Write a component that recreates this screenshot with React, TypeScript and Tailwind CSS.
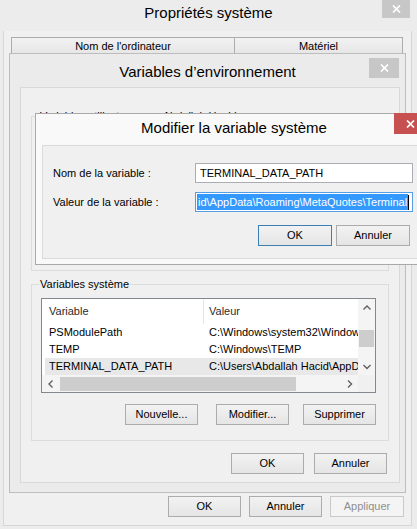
import React from "react";

type BtnProps = {
  label: string;
  className?: string;
  primary?: boolean;
  disabled?: boolean;
};

const Btn = ({ label, className = "", primary, disabled }: BtnProps) => (
  <button
    className={
      "h-[21px] shrink-0 border text-[11px] leading-none " +
      (disabled
        ? "border-[#c9c9c9] bg-[#f4f4f4] text-[#8f8f8f] "
        : primary
        ? "border-[#3c7fb1] bg-linear-to-b from-[#f2f2f2] to-[#e5e5e5] text-black "
        : "border-[#acacac] bg-linear-to-b from-[#f2f2f2] to-[#e5e5e5] text-black ") +
      className
    }
  >
    {label}
  </button>
);

const CloseBtn = ({ className }: { className: string }) => (
  <div className={"absolute flex items-center justify-center " + className}>
    <svg width="9" height="8" viewBox="0 0 9 8">
      <path d="M1 0.5 L8 7.5 M8 0.5 L1 7.5" stroke="white" strokeWidth="1.7" />
    </svg>
  </div>
);

const Chevron = ({ dir }: { dir: "up" | "down" | "left" | "right" }) => {
  const pts = {
    up: "0.5,4.5 4,1 7.5,4.5",
    down: "0.5,1 4,4.5 7.5,1",
    left: "4.5,0.5 1,4 4.5,7.5",
    right: "1,0.5 4.5,4 1,7.5",
  }[dir];
  const vertical = dir === "up" || dir === "down";
  return (
    <svg
      width={vertical ? 8 : 6}
      height={vertical ? 6 : 8}
      viewBox={vertical ? "0 0 8 6" : "0 0 6 8"}
    >
      <polyline points={pts} fill="none" stroke="#606060" strokeWidth="1.4" />
    </svg>
  );
};

const Group = ({
  label,
  className = "",
  children,
}: {
  label: string;
  className?: string;
  children?: React.ReactNode;
}) => (
  <div className={"relative border border-[#dcdcdc] " + className}>
    <span className="absolute left-[7px] -top-[8px] bg-[#f0f0f0] px-[1px] text-[11px] leading-[14px]">
      {label}
    </span>
    {children}
  </div>
);

const rows = [
  { name: "PSModulePath", value: "C:\\Windows\\system32\\WindowsPowerShell\\v1.0\\Modules\\" },
  { name: "TEMP", value: "C:\\Windows\\TEMP" },
  { name: "TERMINAL_DATA_PATH", value: "C:\\Users\\Abdallah Hacid\\AppData\\Roaming\\MetaQuotes\\Terminal", selected: true },
];

const SystemList = () => (
  <div className="flex h-[95px] w-[335px] border border-[#828790] bg-white">
    <div className="flex w-[316px] flex-col">
      <div className="flex h-[25px] shrink-0 items-center text-[11px] text-[#2b2b2b]">
        <div className="flex h-full w-[162px] items-center border-r border-[#e5e5e5] pl-[7px]">
          Variable
        </div>
        <div className="pl-[5px]">Valeur</div>
      </div>
      {rows.map((r) => (
        <div
          key={r.name}
          className={
            "ml-[3px] flex h-[17px] shrink-0 items-center overflow-hidden whitespace-nowrap text-[11px] " +
            (r.selected ? "bg-[#e8e8e8]" : "")
          }
        >
          <div className="w-[159px] shrink-0 pl-[4px]">{r.name}</div>
          <div className="pl-[5px]">{r.value}</div>
        </div>
      ))}
      <div className="flex h-[17px] shrink-0 items-center bg-[#f4f4f4]">
        <div className="flex h-full w-[17px] items-center justify-center">
          <Chevron dir="left" />
        </div>
        <div className="ml-[1px] h-[14px] w-[236px] bg-[#cdcdcd]" />
        <div className="flex-1" />
        <div className="flex h-full w-[17px] items-center justify-center">
          <Chevron dir="right" />
        </div>
      </div>
    </div>
    <div className="flex w-[17px] flex-col">
      <div className="flex flex-1 flex-col bg-[#f4f4f4]">
        <div className="flex h-[17px] items-center justify-center">
          <Chevron dir="up" />
        </div>
        <div className="flex-1">
          <div className="mx-[1px] mt-[14px] h-[17px] bg-[#cdcdcd]" />
        </div>
        <div className="flex h-[17px] items-center justify-center">
          <Chevron dir="down" />
        </div>
      </div>
      <div className="h-[17px] bg-[#f0f0f0]" />
    </div>
  </div>
);

const App = () => {
  return (
    <div className="relative flex h-[529px] w-[417px] flex-col overflow-hidden bg-[#ececec] font-['Liberation_Sans',Arial,sans-serif] text-black">
      {/* Propriétés système */}
      <div className="flex h-[31px] shrink-0 justify-center pt-[4px] text-[15px] leading-[18px]">
        Propriétés système
      </div>
      <CloseBtn className="left-[382px] top-0 h-[18px] w-[28px] bg-[#c7c7c7]" />
      <div className="mb-[3px] ml-[3px] mr-[5px] flex flex-1 flex-col border-x border-b border-[#d6d6d6] bg-[#f0f0f0] px-[7px] pt-[6px] pb-[8px]">
        <div className="flex h-[19px] shrink-0 text-[11px]">
          <div className="flex w-[224px] items-center justify-center border border-[#acacac] bg-linear-to-b from-[#f2f2f2] to-[#e5e5e5]">
            Nom de l'ordinateur
          </div>
          <div className="-ml-[1px] flex w-[169px] items-center justify-center border border-[#acacac] bg-linear-to-b from-[#f2f2f2] to-[#e5e5e5]">
            Matériel
          </div>
        </div>
        <div className="-ml-[1px] mb-[8px] flex-1 border border-[#d9d9d9] bg-white" />
        <div className="flex shrink-0 justify-end gap-[8px]">
          <Btn label="OK" className="w-[73px]" />
          <Btn label="Annuler" className="w-[73px]" />
          <Btn label="Appliquer" className="w-[74px]" disabled />
        </div>
      </div>

      {/* Variables d'environnement */}
      <div className="absolute left-[9px] top-[53px] flex h-[440px] w-[397px] flex-col border border-[#bdbdbd] bg-[#ebebeb]">
        <div className="flex h-[33px] shrink-0 justify-center pt-[9px] text-[15px] leading-[18px]">
          Variables d’environnement
        </div>
        <CloseBtn className="right-[6px] top-[4px] h-[20px] w-[30px] bg-[#c7c7c7]" />
        <div className="mb-[9px] ml-[10px] mr-[5px] flex flex-1 flex-col border border-[#d9d9d9] bg-[#f0f0f0] px-[10px]">
          <Group
            label="Variables utilisateur pour Abdallah Hacid"
            className="mt-[28px] h-[155px] shrink-0"
          />
          <Group label="Variables système" className="mt-[13px] h-[157px] shrink-0">
            <div className="flex flex-col pl-[9px] pt-[13px]">
              <SystemList />
              <div className="mt-[11px] flex w-[335px] justify-end">
                <Btn label="Nouvelle..." className="w-[73px]" />
                <Btn label="Modifier..." className="ml-[18px] w-[73px]" />
                <Btn label="Supprimer" className="ml-[14px] w-[73px]" />
              </div>
            </div>
          </Group>
          <div className="mr-[2px] mt-[12px] flex justify-end gap-[10px]">
            <Btn label="OK" className="w-[73px]" />
            <Btn label="Annuler" className="w-[73px]" />
          </div>
        </div>
      </div>

      {/* Modifier la variable système */}
      <div className="absolute left-[35px] top-[113px] flex h-[152px] w-[398px] flex-col border border-[#a9a9a9] bg-[#f9f9f9]">
        <div className="flex h-[31px] shrink-0 justify-center pt-[5px] text-[15px] leading-[18px]">
          Modifier la variable système
        </div>
        <CloseBtn className="-top-[1px] left-[358px] h-[21px] w-[32px] bg-[#c75050]" />
        <div className="mb-[5px] ml-[6px] flex flex-1 flex-col border border-[#dadada] bg-[#f0f0f0] pl-[10px] pt-[17px] text-[11px]">
          <div className="flex h-[20px] items-center">
            <div className="w-[142px] shrink-0">Nom de la variable :</div>
            <div className="flex h-full w-[218px] items-center border border-[#abadb3] bg-white pl-[4px]">
              TERMINAL_DATA_PATH
            </div>
          </div>
          <div className="mt-[9px] flex h-[20px] items-center">
            <div className="w-[142px] shrink-0">Valeur de la variable :</div>
            <div className="flex h-full w-[218px] items-center overflow-hidden whitespace-nowrap border border-[#569de5] bg-white pl-[1px]">
              <span className="flex h-[16px] items-center bg-[#3399ff] pl-[1px] pr-[1px] text-white">
                id\AppData\Roaming\MetaQuotes\Terminal
              </span>
              <span className="h-[15px] w-[1px] bg-black" />
            </div>
          </div>
          <div className="ml-[205px] mt-[13px] flex gap-[4px]">
            <Btn label="OK" className="w-[74px]" primary />
            <Btn label="Annuler" className="w-[74px]" />
          </div>
        </div>
      </div>
    </div>
  );
};

export default App;
